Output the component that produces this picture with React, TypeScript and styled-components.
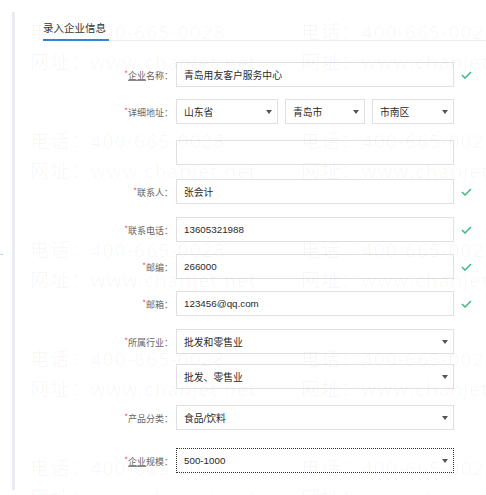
import React from "react";
import styled, { createGlobalStyle } from "styled-components";

const GlobalStyle = createGlobalStyle`
  html, body {
    margin: 0;
    padding: 0;
    background: #ffffff;
  }
  body {
    font-family: "Liberation Sans", "Noto Sans CJK SC", sans-serif;
    color: #333;
  }
`;

type FieldRow = {
  label?: string;
  underline?: boolean;
  value: string;
  kind: "input" | "select";
  ok?: boolean;
  gap: number;
  focused?: boolean;
};

const rows: FieldRow[] = [
  { label: "企业名称", underline: true, value: "青岛用友客户服务中心", kind: "input", ok: true, gap: 0 },
  { label: "联系人", value: "张会计", kind: "input", ok: true, gap: 14 },
  { label: "联系电话", value: "13605321988", kind: "input", ok: true, gap: 13 },
  { label: "邮编", value: "266000", kind: "input", ok: true, gap: 12 },
  { label: "邮箱", value: "123456@qq.com", kind: "input", ok: true, gap: 12 },
  { label: "所属行业", value: "批发和零售业", kind: "select", gap: 13 },
  { value: "批发、零售业", kind: "select", gap: 10 },
  { label: "产品分类", value: "食品/饮料", kind: "select", gap: 16 },
  { label: "企业规模", underline: true, value: "500-1000", kind: "select", gap: 18, focused: true },
];

const Check = () => (
  <svg width="11" height="8" viewBox="0 0 11 8">
    <polyline points="1,4 4,7 10,1" fill="none" stroke="#3dbb7f" strokeWidth="1.5" />
  </svg>
);

const Label = ({ text, underline }: { text?: string; underline?: boolean }) => {
  if (!text) return <LabelCell />;
  const head = underline ? text.slice(0, 2) : "";
  const rest = underline ? text.slice(2) : text;
  return (
    <LabelCell>
      <Star>*</Star>
      {head && <Under>{head}</Under>}
      {rest}：
    </LabelCell>
  );
};

const Row = ({ row }: { row: FieldRow }) => (
  <FormRow $gap={row.gap}>
    <Label text={row.label} underline={row.underline} />
    <Box $width={278} $focused={row.focused}>
      {row.value}
      {row.kind === "select" && <Arrow />}
    </Box>
    <Mark>{row.ok && <Check />}</Mark>
  </FormRow>
);

const tiles = Array.from({ length: 5 }, (_, r) => r);

const App = () => (
  <>
    <GlobalStyle />
    <Page>
      <Side>
        <Tiny>·-</Tiny>
      </Side>
      <Panel>
        <TabBar>
          <Tab>录入企业信息</Tab>
        </TabBar>
        <Form>
          <Row row={rows[0]} />
          <FormRow $gap={12}>
            <Label text="详细地址" />
            <Box $width={102}>
              山东省
              <Arrow />
            </Box>
            <Box $width={80} $ml={7}>
              青岛市
              <Arrow />
            </Box>
            <Box $width={82} $ml={7}>
              市南区
              <Arrow />
            </Box>
            <Mark />
          </FormRow>
          <FormRow $gap={16}>
            <LabelCell />
            <Box $width={278} />
            <Mark />
          </FormRow>
          {rows.slice(1).map((row, i) => (
            <Row key={i} row={row} />
          ))}
        </Form>
      </Panel>
      <Watermark>
        {tiles.map((r) => (
          <WaterRow key={r}>
            <WaterTile>
              <span>电话：400-665-0028</span>
              <span>网址：www.chanjet.net</span>
            </WaterTile>
            <WaterTile>
              <span>电话：400-665-0028</span>
              <span>网址：www.chanjet.net</span>
            </WaterTile>
          </WaterRow>
        ))}
      </Watermark>
    </Page>
  </>
);

const Page = styled.div`
  position: relative;
  width: 486px;
  height: 495px;
  overflow: hidden;
  display: flex;
  padding-top: 12px;
  box-sizing: border-box;
`;

const Side = styled.div`
  width: 12px;
  display: flex;
  align-items: flex-start;
  padding-top: 238px;
`;

const Tiny = styled.span`
  font-size: 6px;
  line-height: 8px;
  color: #555;
  margin-left: -1px;
`;

const Panel = styled.div`
  flex: 1;
  height: 478px;
  border-left: 3px solid #e9ebee;
  padding-left: 28px;
`;

const TabBar = styled.div`
  display: flex;
  border-bottom: 1px solid #ececec;
  padding-top: 8px;
`;

const Tab = styled.div`
  font-family: "Noto Sans CJK SC", sans-serif;
  font-size: 10.5px;
  line-height: 16px;
  color: #333;
  padding: 0 3px 3px 0;
  border-bottom: 2px solid #2f86d4;
  margin-bottom: -1px;
`;

const Form = styled.div`
  padding-top: 21px;
  display: flex;
  flex-direction: column;
`;

const FormRow = styled.div<{ $gap: number }>`
  display: flex;
  align-items: center;
  height: 25px;
  margin-top: ${(p) => p.$gap}px;
`;

const LabelCell = styled.div`
  width: 133px;
  flex-shrink: 0;
  text-align: right;
  padding-right: 3px;
  box-sizing: border-box;
  font-family: "Noto Sans CJK SC", sans-serif;
  font-size: 9px;
  color: #666;
`;

const Star = styled.span`
  color: #f04848;
  font-size: 8px;
  vertical-align: 2px;
`;

const Under = styled.span`
  text-decoration: underline;
  text-decoration-color: #8a8a8a;
`;

const Box = styled.div<{ $width: number; $ml?: number; $focused?: boolean }>`
  position: relative;
  width: ${(p) => p.$width}px;
  height: 25px;
  margin-left: ${(p) => p.$ml ?? 0}px;
  box-sizing: border-box;
  border: 1px ${(p) => (p.$focused ? "dotted #333" : "solid #e0e0e0")};
  padding-left: 7px;
  display: flex;
  align-items: center;
  font-family: "Liberation Sans", "Noto Sans CJK SC", sans-serif;
  font-size: 9.8px;
  color: #2a2a2a;
  background: #fff;
`;

const Arrow = styled.span`
  position: absolute;
  right: 5px;
  top: 10px;
  width: 0;
  height: 0;
  border-left: 3px solid transparent;
  border-right: 3px solid transparent;
  border-top: 4px solid #555;
`;

const Mark = styled.div`
  width: 18px;
  display: flex;
  justify-content: flex-end;
  padding-top: 1px;
`;

const Watermark = styled.div`
  position: absolute;
  left: 30px;
  top: 17px;
  pointer-events: none;
  display: flex;
  flex-direction: column;
`;

const WaterRow = styled.div`
  display: flex;
  height: 109px;
`;

const WaterTile = styled.div`
  width: 271px;
  display: flex;
  flex-direction: column;
  font-family: "Open Sans", "Noto Sans CJK SC", sans-serif;
  font-size: 19px;
  line-height: 30px;
  letter-spacing: 1.2px;
  color: rgba(0, 0, 0, 0.035);
  white-space: nowrap;
`;

export default App;
